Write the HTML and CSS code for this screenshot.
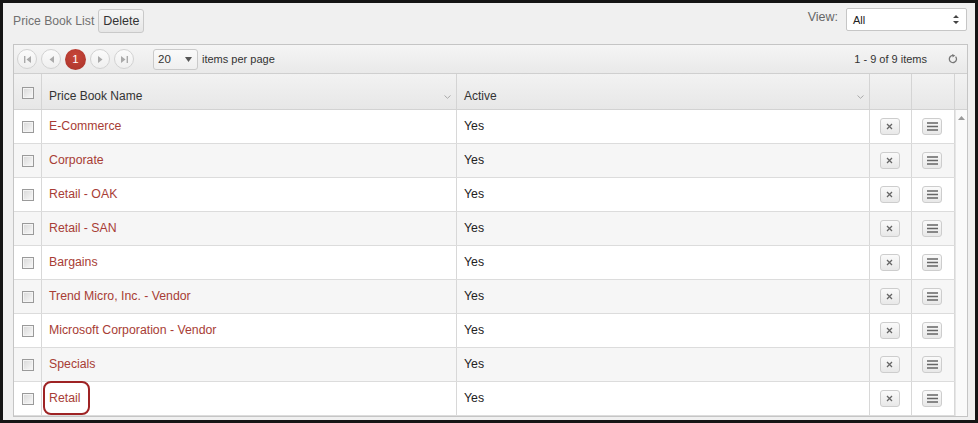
FILE: index.html
```html
<!DOCTYPE html>
<html lang="en">
<head>
    <meta charset="UTF-8">
    <title>Price Book List</title>
    <link rel="stylesheet" href="styles.css">
</head>
<body>
    <div class="frame">
        <div class="toolbar">
            <div class="toolbar-left">
                <span class="page-title">Price Book List</span>
                <button class="btn">Delete</button>
            </div>
            <div class="toolbar-right">
                <span class="view-label">View:</span>
                <div class="view-select">
                    <span>All</span>
                    <svg width="6" height="9" viewBox="0 0 6 9"><path d="M3 0L6 3H0z M3 9L0 6H6z" fill="#444"/></svg>
                </div>
            </div>
        </div>

        <div class="grid">
            <div class="pager">
                <div class="pager-nav">
                    <span class="pager-btn"><svg width="7" height="7" viewBox="0 0 7 7"><path d="M0 0h1.4v7H0z M7 0v7L2.5 3.5z" fill="#aaa"/></svg></span>
                    <span class="pager-btn"><svg width="5" height="7" viewBox="0 0 5 7"><path d="M5 0v7L0.5 3.5z" fill="#aaa"/></svg></span>
                    <span class="pager-current">1</span>
                    <span class="pager-btn"><svg width="5" height="7" viewBox="0 0 5 7"><path d="M0 0v7L4.5 3.5z" fill="#aaa"/></svg></span>
                    <span class="pager-btn"><svg width="7" height="7" viewBox="0 0 7 7"><path d="M5.6 0H7v7H5.6z M0 0v7L4.5 3.5z" fill="#aaa"/></svg></span>
                </div>
                <div class="page-size">
                    <span>20</span>
                    <svg width="7" height="5" viewBox="0 0 7 5"><path d="M0 0h7L3.5 5z" fill="#555"/></svg>
                </div>
                <span class="pager-label">items per page</span>
                <span class="pager-info">1 - 9 of 9 items</span>
                <span class="pager-refresh">
                    <svg width="10" height="10" viewBox="0 0 10 10"><path d="M7.6 2.6A3.6 3.6 0 1 1 5 1.4" fill="none" stroke="#777" stroke-width="1.3"/><path d="M4.2 0L7.2 1.5L4.6 3.4z" fill="#777"/></svg>
                </span>
            </div>

            <div class="grid-header">
                <div class="hcell cell-check"><span class="check"></span></div>
                <div class="hcell">Price Book Name <svg class="sort" width="7" height="4" viewBox="0 0 7 4"><path d="M0.5 0.5L3.5 3.3L6.5 0.5" fill="none" stroke="#aaa" stroke-width="1"/></svg></div>
                <div class="hcell">Active <svg class="sort" width="7" height="4" viewBox="0 0 7 4"><path d="M0.5 0.5L3.5 3.3L6.5 0.5" fill="none" stroke="#aaa" stroke-width="1"/></svg></div>
                <div class="hcell"></div>
                <div class="hcell"></div>
                <div class="hcell hcell-scroll"></div>
            </div>

            <div class="grid-content">
                <div class="grid-rows" id="rows"></div>
                <div class="scrollbar">
                    <svg width="7" height="4" viewBox="0 0 7 4"><path d="M3.5 0L7 4H0z" fill="#999"/></svg>
                </div>
            </div>
        </div>
    </div>

    <script>
        const priceBooks = [
            'E-Commerce',
            'Corporate',
            'Retail - OAK',
            'Retail - SAN',
            'Bargains',
            'Trend Micro, Inc. - Vendor',
            'Microsoft Corporation - Vendor',
            'Specials',
            'Retail'
        ];

        const rowsEl = document.getElementById('rows');
        const xIcon = '<svg width="7" height="7" viewBox="0 0 7 7"><path d="M1 1L6 6M6 1L1 6" stroke="#666" stroke-width="1.3"/></svg>';
        const menuIcon = '<svg width="11" height="9" viewBox="0 0 11 9"><path d="M0 1h11M0 4.5h11M0 8h11" stroke="#666" stroke-width="1.6"/></svg>';

        priceBooks.forEach((name, i) => {
            const row = document.createElement('div');
            row.className = 'row' + (i % 2 ? ' row-alt' : '');
            const marked = name === 'Retail' ? ' marked' : '';
            row.innerHTML = `
                <div class="cell cell-check"><span class="check"></span></div>
                <div class="cell"><a class="book-link${marked}" href="#">${name}</a></div>
                <div class="cell">Yes</div>
                <div class="cell cell-btn"><span class="icon-btn">${xIcon}</span></div>
                <div class="cell cell-btn"><span class="icon-btn">${menuIcon}</span></div>`;
            rowsEl.appendChild(row);
        });
    </script>
</body>
</html>
```

FILE: styles.css
```css
html, body {
    margin: 0;
    padding: 0;
}
body {
    font-family: 'Liberation Sans', Arial, sans-serif;
    font-size: 12px;
    color: #333;
}
.frame {
    width: 978px;
    height: 423px;
    box-sizing: border-box;
    border: 3px solid #151515;
    background: #f0f0f0;
    padding: 5px 8px 0 10px;
    overflow: hidden;
}

/* top toolbar */
.toolbar {
    display: flex;
    justify-content: space-between;
    align-items: flex-start;
    height: 31px;
    margin-bottom: 5px;
}
.toolbar-left {
    display: flex;
    align-items: center;
    gap: 4px;
    margin-top: 1px;
}
.page-title {
    color: #707070;
    font-size: 12.2px;
}
.btn {
    font-family: inherit;
    font-size: 12.5px;
    color: #333;
    height: 24px;
    padding: 0 4px;
    border: 1px solid #c9c9c9;
    border-radius: 3px;
    background: linear-gradient(#f7f7f7, #e6e6e6);
}
.toolbar-right {
    display: flex;
    align-items: center;
    gap: 8px;
}
.view-label {
    color: #666;
    font-size: 12.5px;
    margin-top: -6px;
}
.view-select {
    width: 121px;
    height: 23px;
    box-sizing: border-box;
    background: #fff;
    border: 1px solid #c6c6c6;
    border-radius: 2px;
    display: flex;
    align-items: center;
    justify-content: space-between;
    padding: 0 7px 0 6px;
    font-size: 11px;
    color: #222;
}

/* grid */
.grid {
    border: 1px solid #c5c5c5;
    background: #fff;
    width: 955px;
    box-sizing: border-box;
}
.pager {
    height: 28px;
    border-bottom: 1px solid #cfcfcf;
    background: linear-gradient(#f5f5f5, #e9e9e9);
    display: flex;
    align-items: center;
    padding: 0 4px 0 3px;
    font-size: 11px;
    color: #333;
}
.pager-nav {
    display: flex;
    align-items: center;
    gap: 4px;
}
.pager-btn {
    width: 18px;
    height: 18px;
    border: 1px solid #d2d2d2;
    border-radius: 50%;
    background: linear-gradient(#fbfbfb, #efefef);
    display: flex;
    align-items: center;
    justify-content: center;
}
.pager-current {
    width: 21px;
    height: 21px;
    border-radius: 50%;
    background: radial-gradient(circle at 50% 35%, #c8463a, #a9332a);
    color: #fff;
    font-size: 11.5px;
    display: flex;
    align-items: center;
    justify-content: center;
}
.page-size {
    margin-left: 19px;
    width: 45px;
    height: 21px;
    box-sizing: border-box;
    border: 1px solid #cacaca;
    border-radius: 3px;
    background: linear-gradient(#fafafa, #efefef);
    display: flex;
    align-items: center;
    justify-content: space-between;
    padding: 0 5px 0 4px;
    font-size: 11.5px;
}
.pager-label {
    margin-left: 4px;
}
.pager-info {
    margin-left: auto;
    font-size: 11px;
}
.pager-refresh {
    margin-left: 21px;
    margin-right: 5px;
    display: flex;
}

.grid-header {
    display: grid;
    grid-template-columns: 28px 415px 413px 42px 43px 12px;
    height: 36px;
    box-sizing: border-box;
    border-bottom: 1px solid #d2d2d2;
    background: linear-gradient(#f2f2f2, #e7e7e7);
}
.hcell {
    border-right: 1px solid #d4d4d4;
    padding: 14px 0 0 7px;
    line-height: 16px;
    position: relative;
    color: #333;
}
.hcell-scroll {
    border-right: 0;
}
.sort {
    position: absolute;
    right: 5px;
    top: 21px;
}
.hcell.cell-check,
.cell.cell-check {
    padding: 0;
    display: flex;
    align-items: center;
    justify-content: center;
}
.hcell.cell-check {
    padding-top: 3px;
}
.check {
    width: 10px;
    height: 10px;
    border: 1px solid #9a9a9a;
    background: linear-gradient(135deg, #d8d8d8, #f9f9f9);
    box-shadow: inset 0 0 0 1px #f4f4f4;
}

.grid-content {
    display: flex;
}
.grid-rows {
    width: 941px;
}
.row {
    display: grid;
    grid-template-columns: 28px 415px 413px 42px 43px;
    height: 34px;
    box-sizing: border-box;
    border-bottom: 1px solid #dcdcdc;
    background: #fff;
}
.row-alt {
    background: #f6f6f6;
}
.cell {
    border-right: 1px solid #d8d8d8;
    padding-left: 7px;
    padding-bottom: 2px;
    display: flex;
    align-items: center;
    color: #222;
    font-size: 12.3px;
}
.cell-btn {
    padding: 0 2px 0 0;
    justify-content: center;
}
.icon-btn {
    width: 18px;
    height: 15px;
    border: 1px solid #cdcdcd;
    border-radius: 3px;
    background: linear-gradient(#fafafa, #e8e8e8);
    display: flex;
    align-items: center;
    justify-content: center;
}
.book-link {
    color: #a83d35;
    text-decoration: none;
    position: relative;
}
.book-link.marked::after {
    content: '';
    position: absolute;
    left: -6px;
    right: -10px;
    top: -10px;
    bottom: -10px;
    border: 2px solid #9e2324;
    border-radius: 8px;
}
.scrollbar {
    width: 12px;
    background: #fafafa;
    border-left: 1px solid #e6e6e6;
    display: flex;
    justify-content: center;
    padding-top: 6px;
    height: 300px;
}
```
